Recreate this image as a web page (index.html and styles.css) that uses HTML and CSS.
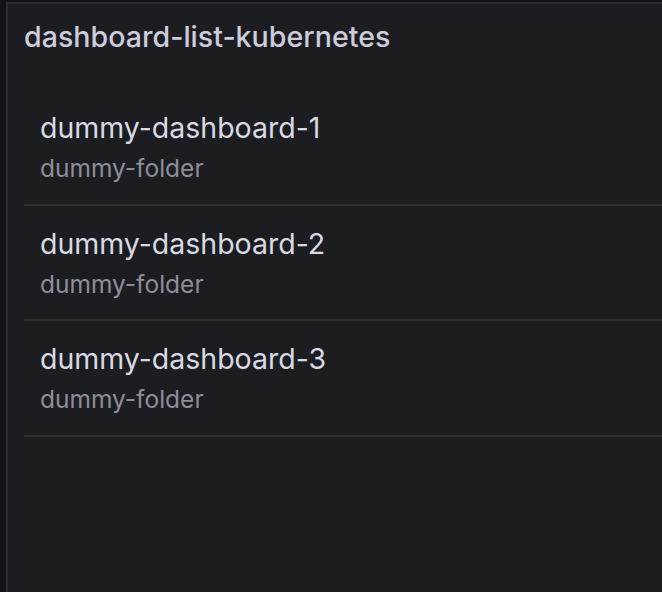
FILE: index.html
```html
<!doctype html>
<html lang="en">
<head>
  <meta charset="UTF-8">
  <title>dashboard-list-kubernetes</title>
  <link rel="stylesheet" href="styles.css">
</head>
<body>
  <div class="panel">
    <div class="panel-header">
      <h2 class="panel-title">dashboard-list-kubernetes</h2>
    </div>
    <div class="panel-content">
      <ul class="dash-list">
        <li class="dash-item">
          <a class="dash-link" href="#">dummy-dashboard-1</a>
          <div class="dash-folder">dummy-folder</div>
        </li>
        <li class="dash-item">
          <a class="dash-link" href="#">dummy-dashboard-2</a>
          <div class="dash-folder">dummy-folder</div>
        </li>
        <li class="dash-item">
          <a class="dash-link" href="#">dummy-dashboard-3</a>
          <div class="dash-folder">dummy-folder</div>
        </li>
      </ul>
    </div>
  </div>
</body>
</html>
```

FILE: styles.css
```css
html, body {
    margin: 0;
    padding: 0;
    height: 100%;
    overflow: hidden;
}

body {
    background: #111217;
    font-family: Inter, "Noto Sans", sans-serif;
    color: #ccccdc;
    padding: 2px 0 0 6px;
    box-sizing: border-box;
}

.panel {
    box-sizing: border-box;
    height: 100%;
    background: #1c1d21;
    border: 2px solid #2c2d32;
    border-right: none;
    border-bottom: none;
}

.panel-header {
    height: 64px;
    display: flex;
    align-items: center;
    padding: 0 16px;
}

.panel-title {
    margin: 0;
    font-size: 28.6px;
    font-weight: 500;
    color: #ccccdc;
}

.panel-content {
    padding: 22px 0 0 16px;
}

.dash-list {
    list-style: none;
    margin: 0;
    padding: 0;
}

.dash-item {
    padding: 16px 16px 17.5px;
    border-bottom: 2px solid #2f3035;
}

.dash-link {
    display: block;
    font-size: 28.5px;
    line-height: 44px;
    color: #d8d9e3;
    text-decoration: none;
}

.dash-folder {
    font-size: 24.5px;
    line-height: 36px;
    color: #8e8e99;
}
```
